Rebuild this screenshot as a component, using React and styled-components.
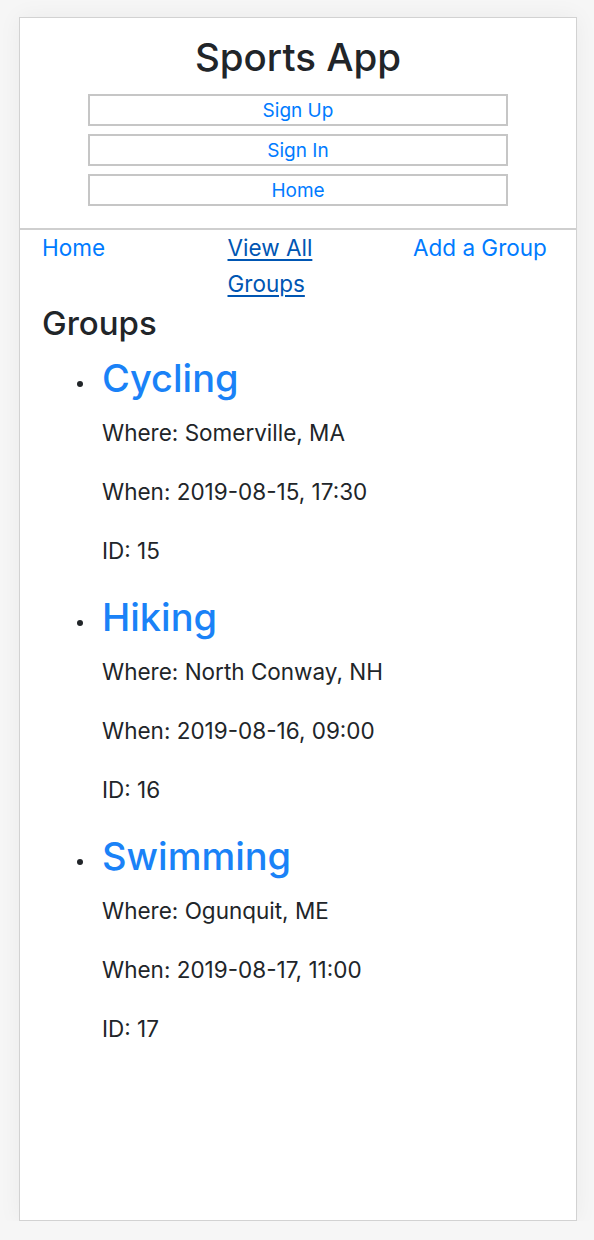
import React from "react";
import styled, { createGlobalStyle } from "styled-components";

const groups = [
    { name: "Cycling", where: "Somerville, MA", when: "2019-08-15, 17:30", id: 15 },
    { name: "Hiking", where: "North Conway, NH", when: "2019-08-16, 09:00", id: 16 },
    { name: "Swimming", where: "Ogunquit, ME", when: "2019-08-17, 11:00", id: 17 },
];

export default function App() {
    return (
        <>
            <GlobalStyle />
            <Card>
                <Header>
                    <Title>Sports App</Title>
                    <ButtonStack>
                        <MenuButton>Sign Up</MenuButton>
                        <MenuButton>Sign In</MenuButton>
                        <MenuButton>Home</MenuButton>
                    </ButtonStack>
                </Header>
                <Nav>
                    <NavLink href="#">Home</NavLink>
                    <NavLink href="#" active>View All Groups</NavLink>
                    <NavLink href="#">Add a Group</NavLink>
                </Nav>
                <Content>
                    <Heading>Groups</Heading>
                    <GroupList>
                        {groups.map(g => (
                            <GroupItem key={g.id}>
                                <GroupName href="#">{g.name}</GroupName>
                                <Detail>Where: {g.where}</Detail>
                                <Detail>When: {g.when}</Detail>
                                <Detail>ID: {g.id}</Detail>
                            </GroupItem>
                        ))}
                    </GroupList>
                </Content>
            </Card>
        </>
    );
}

const GlobalStyle = createGlobalStyle`
body {
    margin: 0;
    background-color: #f6f6f6;
    font-family: Inter, "Liberation Sans", sans-serif;
    color: #212529;
}
`;

const Card = styled.div`
box-sizing: border-box;
margin: 17px 0 0 19px;
width: 558px;
height: 1204px;
background-color: white;
border: 1px solid #d2d2d2;
box-shadow: 0 0 22px rgba(0, 0, 0, 0.05);
`;

const Header = styled.div`
display: flex;
flex-direction: column;
align-items: center;
padding: 15px 0 22px;
border-bottom: 2px solid #cfcfcf;
`;

const Title = styled.h1`
margin: 0 0 13px;
font-size: 38.5px;
line-height: 48px;
font-weight: 500;
`;

const ButtonStack = styled.div`
display: flex;
flex-direction: column;
gap: 8px;
`;

const MenuButton = styled.button`
box-sizing: border-box;
width: 420px;
height: 32px;
background: white;
border: 2px solid #c6c6c6;
color: #007bff;
font-family: Inter, "Liberation Sans", sans-serif;
font-size: 19px;
padding: 0;
`;

const Nav = styled.div`
display: grid;
grid-template-columns: repeat(3, 150px);
column-gap: 35.5px;
padding: 0 22px;
font-size: 22.5px;
line-height: 36px;
`;

const NavLink = styled.a`
color: ${props => (props.active ? "#0056b3" : "#007bff")};
text-decoration: ${props => (props.active ? "underline" : "none")};
text-underline-offset: 3px;
text-decoration-thickness: 2px;
`;

const Content = styled.div`
padding: 0 22px;
`;

const Heading = styled.h2`
margin: 2px 0 13px;
font-size: 33px;
line-height: 38px;
font-weight: 500;
`;

const GroupList = styled.ul`
margin: 0;
padding-left: 60px;
list-style: none;
display: flex;
flex-direction: column;
gap: 28px;
`;

const GroupItem = styled.li`
position: relative;
font-size: 22.5px;
line-height: 30px;
&::before {
    content: "";
    position: absolute;
    left: -25px;
    top: 26px;
    width: 6px;
    height: 6px;
    border-radius: 50%;
    background-color: #212529;
}
`;

const GroupName = styled.a`
display: block;
margin-bottom: 17px;
color: #1a82f7;
text-decoration: none;
font-size: 38px;
line-height: 46px;
font-weight: 500;
`;

const Detail = styled.p`
margin: 0 0 29px;
&:last-child {
    margin-bottom: 0;
}
`;
